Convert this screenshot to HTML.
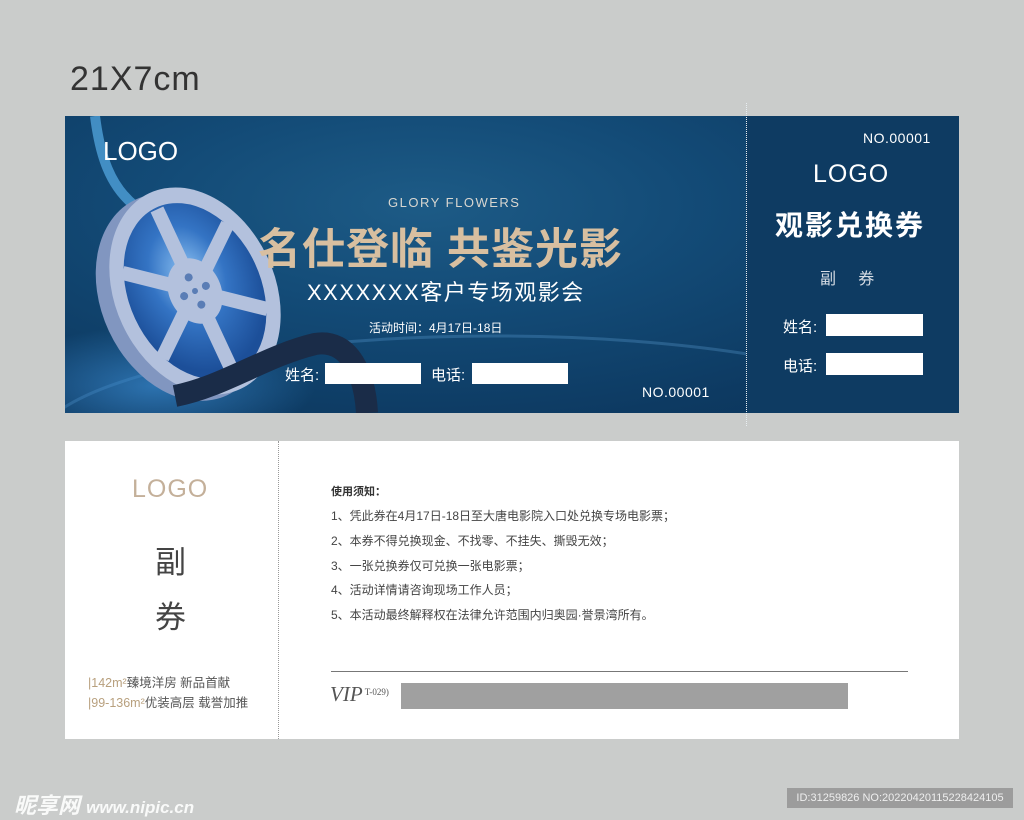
<!DOCTYPE html>
<html><head><meta charset="utf-8"><style>
*{margin:0;padding:0;box-sizing:border-box}
body{width:1024px;height:819px;background:#cacccb;position:relative;overflow:hidden;font-family:"Liberation Sans","Noto Sans CJK SC",sans-serif}
.a{position:absolute}
.top{left:65px;top:116px;width:894px;height:297px;background:radial-gradient(ellipse at 40% 30%,#1d5b86 0%,#134b77 35%,#0d3a62 75%,#0b3358 100%);overflow:hidden}
.w{color:#fff}
.box{background:#fff}
.bot{left:65px;top:441px;width:894px;height:298px;background:#fff}
</style></head><body>
<div class="a" style="left:70px;top:60px;font-size:34px;color:#333;letter-spacing:1px">21X7cm</div>
<div class="a top">
 <svg class="a" style="left:0;top:0" width="894" height="297">
  <defs>
   <radialGradient id="g1" cx="50%" cy="40%" r="55%"><stop offset="0" stop-color="#8fc4f4"/><stop offset="0.5" stop-color="#3474c4"/><stop offset="1" stop-color="#1c4f99"/></radialGradient>
   <radialGradient id="gl" cx="50%" cy="50%" r="50%"><stop offset="0" stop-color="#3a8ad0" stop-opacity=".7"/><stop offset="1" stop-color="#3a8ad0" stop-opacity="0"/></radialGradient>
  </defs>
  <ellipse cx="430" cy="330" rx="460" ry="110" fill="none" stroke="#5fa3d8" stroke-opacity=".3" stroke-width="3"/>
  <ellipse cx="90" cy="270" rx="160" ry="60" fill="url(#gl)"/>
  <path d="M30 0 C35 40 45 70 70 90" stroke="#4fa0d8" stroke-width="10" fill="none" opacity=".8"/>
  <g transform="rotate(-25 130 175)">
   <ellipse cx="115" cy="175" rx="80" ry="108" fill="#8196c0"/>
   <ellipse cx="130" cy="175" rx="80" ry="108" fill="#b3c1dd"/>
   <ellipse cx="130" cy="175" rx="66" ry="92" fill="url(#g1)"/>
   <g stroke="#b3c1dd" stroke-width="14">
    <line x1="130" y1="85" x2="130" y2="265"/>
    <line x1="72" y1="128" x2="188" y2="222"/>
    <line x1="72" y1="222" x2="188" y2="128"/>
   </g>
   <ellipse cx="130" cy="175" rx="26" ry="34" fill="#b3c1dd"/>
   <g fill="#5a7db5"><circle cx="130" cy="160" r="4"/><circle cx="130" cy="190" r="4"/><circle cx="118" cy="175" r="4"/><circle cx="142" cy="175" r="4"/><circle cx="130" cy="175" r="3"/></g>
  </g>
  <path d="M110 280 C160 270 200 240 250 228 C285 222 300 260 302 297" stroke="#1a2c48" stroke-width="22" fill="none"/>
 </svg>
 <div class="a w" style="left:38px;top:20px;font-size:26px">LOGO</div>
 <div class="a" style="left:323px;top:79px;font-size:13px;color:#d8d6d0;letter-spacing:1.5px">GLORY FLOWERS</div>
 <div class="a" style="left:193px;top:99px;font-size:43px;font-weight:bold;color:#d8bfa0;letter-spacing:1px;white-space:nowrap">名仕登临 共鉴光影</div>
 <div class="a w" style="left:242px;top:159px;font-size:22px;letter-spacing:1.5px;white-space:nowrap">XXXXXXX客户专场观影会</div>
 <div class="a w" style="left:304px;top:203px;font-size:12px;white-space:nowrap">活动时间：4月17日-18日</div>
 <div class="a w" style="left:220px;top:248px;font-size:15px">姓名:</div>
 <div class="a box" style="left:260px;top:247px;width:96px;height:21px"></div>
 <div class="a w" style="left:366px;top:248px;font-size:15px">电话:</div>
 <div class="a box" style="left:407px;top:247px;width:96px;height:21px"></div>
 <div class="a w" style="left:577px;top:268px;font-size:14px;letter-spacing:.5px">NO.00001</div>
 <div class="a" style="left:681px;top:0;width:213px;height:297px;background:#0e3b62"></div>
 <div class="a w" style="left:798px;top:14px;font-size:14px;letter-spacing:.5px">NO.00001</div>
 <div class="a w" style="left:748px;top:44px;font-size:25px;letter-spacing:1px">LOGO</div>
 <div class="a w" style="left:710px;top:88px;font-size:28px;font-weight:bold;letter-spacing:2px;white-space:nowrap">观影兑换券</div>
 <div class="a" style="left:755px;top:149px;font-size:16px;color:#d6dce4;white-space:nowrap">副&nbsp;&nbsp;&nbsp;&nbsp;&nbsp;券</div>
 <div class="a w" style="left:718px;top:200px;font-size:15px">姓名:</div>
 <div class="a box" style="left:761px;top:198px;width:97px;height:22px"></div>
 <div class="a w" style="left:718px;top:239px;font-size:15px">电话:</div>
 <div class="a box" style="left:761px;top:237px;width:97px;height:22px"></div>
</div>
<div class="a" style="left:746px;top:103px;height:323px;border-left:1px dotted #e8eef2"></div>
<div class="a bot">
 <div class="a" style="left:213px;top:0;height:298px;border-left:1px dotted #999"></div>
 <div class="a" style="left:67px;top:34px;font-size:25px;color:#c4b09a;letter-spacing:1px">LOGO</div>
 <div class="a" style="left:90px;top:96px;font-size:31px;color:#444">副</div>
 <div class="a" style="left:90px;top:151px;font-size:31px;color:#444">券</div>
 <div class="a" style="left:23px;top:231px;font-size:12.5px;color:#555;white-space:nowrap"><span style="color:#b8a07e">|142m²</span>臻境洋房 新品首献</div>
 <div class="a" style="left:23px;top:251px;font-size:12.5px;color:#555;white-space:nowrap"><span style="color:#b8a07e">|99-136m²</span>优装高层 载誉加推</div>
 <div class="a" style="left:266px;top:42px;font-size:11px;font-weight:bold;color:#333">使用须知：</div>
 <div class="a" style="left:266px;top:63px;font-size:12px;color:#444;line-height:24.8px;white-space:nowrap">1、凭此券在4月17日-18日至大唐电影院入口处兑换专场电影票；<br>2、本券不得兑换现金、不找零、不挂失、撕毁无效；<br>3、一张兑换券仅可兑换一张电影票；<br>4、活动详情请咨询现场工作人员；<br>5、本活动最终解释权在法律允许范围内归奥园·誉景湾所有。</div>
 <div class="a" style="left:266px;top:230px;width:577px;border-top:1px solid #777"></div>
 <div class="a" style="left:265px;top:241px;font-family:'Liberation Serif',serif;font-style:italic;font-size:21px;color:#555">VIP<span style="font-size:9px;font-style:normal;vertical-align:6px"> T-029)</span></div>
 <div class="a" style="left:336px;top:242px;width:447px;height:26px;background:#a0a0a0"></div>
</div>
<div class="a" style="left:14px;top:788px;font-size:22px;font-weight:bold;font-style:italic;color:#fff;opacity:.9;white-space:nowrap">昵享网 <span style="font-size:17px">www.nipic.cn</span></div>
<div class="a" style="left:787px;top:788px;width:226px;height:20px;background:#9c9c9c;color:#eee;font-size:11px;line-height:20px;text-align:center;white-space:nowrap">ID:31259826 NO:20220420115228424105</div>
</body></html>
